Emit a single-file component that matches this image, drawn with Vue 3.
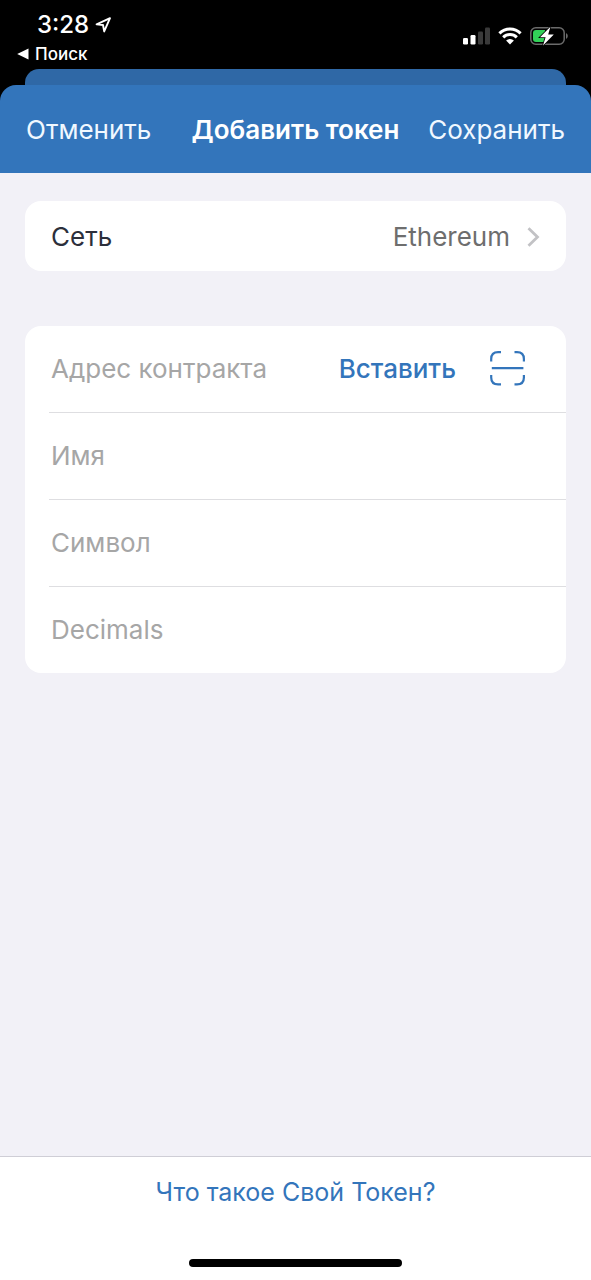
<script setup>
import { reactive } from 'vue'

const fields = [
  { id: 'contract', label: 'Адрес контракта', paste: true },
  { id: 'name', label: 'Имя' },
  { id: 'symbol', label: 'Символ' },
  { id: 'decimals', label: 'Decimals' },
]

const token = reactive({ contract: '', name: '', symbol: '', decimals: '' })
</script>

<template>
  <div class="screen">
    <div class="status">
      <div class="status-left">
        <div class="time">
          <span>3:28</span>
          <svg class="location" width="17" height="17" viewBox="0 0 17 17" aria-hidden="true">
            <path d="M1.6 7.4 15 1.2 9.2 14.4 8 8Z" fill="none" stroke="#fff" stroke-width="1.9" stroke-linejoin="round" />
          </svg>
        </div>
        <button type="button" class="back">
          <svg width="12" height="12" viewBox="0 0 12 12" aria-hidden="true">
            <path d="M.2 6 11.5.5v11Z" fill="#fff" />
          </svg>
          <span>Поиск</span>
        </button>
      </div>
      <div class="status-right">
        <svg width="27" height="18" viewBox="0 0 27 18" aria-hidden="true">
          <rect x="0" y="11" width="5" height="6.5" rx="1.2" fill="#fff" />
          <rect x="7.5" y="8" width="5" height="9.5" rx="1.2" fill="#fff" />
          <rect x="15" y="4.5" width="5" height="13" rx="1.2" fill="#3a3a3a" />
          <rect x="22" y="0.5" width="5" height="17" rx="1.2" fill="#3a3a3a" />
        </svg>
        <svg width="24" height="18" viewBox="0 0 24 18" aria-hidden="true">
          <path d="M1.4 6.4a15 15 0 0 1 21.2 0M5.2 10.4a9.6 9.6 0 0 1 13.6 0" fill="none" stroke="#fff" stroke-width="3" />
          <path d="M12 17.6 8.1 13.6a5.6 5.6 0 0 1 7.8 0Z" fill="#fff" />
        </svg>
        <svg width="38" height="20" viewBox="0 0 38 20" aria-hidden="true">
          <rect x=".8" y="1.8" width="33.4" height="16.4" rx="5" fill="none" stroke="#6b6b6b" stroke-width="1.5" />
          <path d="M36 7v6a3.4 3.4 0 0 0 0-6Z" fill="#6b6b6b" />
          <path d="M6 4h9v12H6a3 3 0 0 1-3-3V7a3 3 0 0 1 3-3Z" fill="#32d158" />
          <path d="M20.4.8 10 11.2h5.6L13 19.4 23.8 8.6h-5.6Z" fill="#fff" stroke="#000" stroke-width="1.6" paint-order="stroke" />
        </svg>
      </div>
    </div>

    <div class="backdrop">
      <div class="sheet-behind"></div>
      <header class="header">
        <button type="button" class="nav-button">Отменить</button>
        <h1>Добавить токен</h1>
        <button type="button" class="nav-button end">Сохранить</button>
      </header>
    </div>

    <main class="content">
      <button type="button" class="card network">
        <span>Сеть</span>
        <span class="value">Ethereum</span>
        <svg width="13" height="20" viewBox="0 0 13 20" aria-hidden="true">
          <path d="M1.5 1.2 10.5 10l-9 8.8" fill="none" stroke="#c2c2c5" stroke-width="2.8" />
        </svg>
      </button>

      <form class="card form" @submit.prevent>
        <div v-for="field in fields" :key="field.id" class="row">
          <input
            :id="field.id"
            v-model="token[field.id]"
            type="text"
            :placeholder="field.label"
            :aria-label="field.label"
          />
          <template v-if="field.paste">
            <button type="button" class="paste">Вставить</button>
            <button type="button" class="scan" aria-label="Сканировать">
              <svg width="36" height="36" viewBox="0 0 36 36" aria-hidden="true">
                <g fill="none" stroke="#3375bb" stroke-width="2.2">
                  <path d="M1.2 10.5V8Q1.2 1.1 8.1 1.1H11M24.5 1.1H27q6.9 0 6.9 6.9v2.5M33.9 24v2.5q0 6.9-6.9 6.9h-2.5M11 33.4H8.1q-6.9 0-6.9-6.9V24" />
                  <path d="M1.8 17.2h31.6" />
                </g>
              </svg>
            </button>
          </template>
        </div>
      </form>
    </main>

    <footer class="footer">
      <a href="#">Что такое Свой Токен?</a>
      <div class="home-indicator"></div>
    </footer>
  </div>
</template>

<style>
body {
  margin: 0;
  background: #f2f1f7;
}
</style>

<style scoped>
.screen {
  display: flex;
  flex-direction: column;
  min-height: 100vh;
  font-family: Inter, Roboto, sans-serif;
  font-size: 26px;
  line-height: 32px;
  color: #2c2f3b;
}

button,
input {
  margin: 0;
  padding: 0;
  border: 0;
  background: none;
  font: inherit;
  color: inherit;
}

svg {
  display: block;
  flex: none;
}

.status {
  display: flex;
  justify-content: space-between;
  align-items: flex-start;
  height: 69px;
  box-sizing: border-box;
  padding: 10px 23px 0 17px;
  background: #000;
  color: #fff;
}

.time {
  display: flex;
  align-items: center;
  gap: 6px;
  padding-left: 20px;
  font-size: 24px;
  line-height: 30px;
  font-weight: 500;
}

.back {
  display: flex;
  align-items: center;
  gap: 6px;
  font-size: 17px;
  line-height: 28px;
  font-weight: 500;
}

.status-right {
  display: flex;
  align-items: center;
  gap: 8px;
  padding-top: 16px;
}

.backdrop {
  background: #000;
}

.sheet-behind {
  height: 16px;
  margin: 0 25px;
  border-radius: 14px 14px 0 0;
  background: #2f68a6;
}

.header {
  display: grid;
  grid-template-columns: 1fr auto 1fr;
  align-items: center;
  padding: 29px 26px 27px;
  border-radius: 16px 16px 0 0;
  background: #3375bb;
  color: #fff;
}

.header h1 {
  margin: 0;
  font-size: 26px;
  font-weight: 600;
  white-space: nowrap;
}

.nav-button {
  justify-self: start;
  color: #f0f8ff;
}

.nav-button.end {
  justify-self: end;
}

.content {
  flex: 1;
  display: flex;
  flex-direction: column;
  gap: 55px;
  padding: 28px 25px;
}

.card {
  border-radius: 16px;
  background: #fff;
}

.network {
  display: flex;
  align-items: center;
  padding: 20px 26px 18px;
  text-align: left;
}

.network .value {
  margin: 0 17px 0 auto;
  color: #6e6e6e;
}

.row {
  display: flex;
  align-items: center;
  height: 86px;
  margin-left: 24px;
  padding: 0 40px 0 2px;
}

.row + .row {
  border-top: 1px solid #dedee1;
}

.row input {
  flex: 1;
  min-width: 0;
  outline: none;
}

.row input::placeholder {
  color: #a6a6a6;
  opacity: 1;
}

.paste {
  margin-right: 34px;
  color: #3375bb;
  font-weight: 500;
}

.footer {
  display: flex;
  flex-direction: column;
  align-items: center;
  gap: 51px;
  padding: 19px 0 13px;
  border-top: 1px solid #cfced6;
  background: #fff;
}

.footer a {
  color: #3375bb;
  font-size: 25px;
  text-decoration: none;
}

.home-indicator {
  width: 36%;
  height: 8px;
  border-radius: 4px;
  background: #000;
}
</style>
